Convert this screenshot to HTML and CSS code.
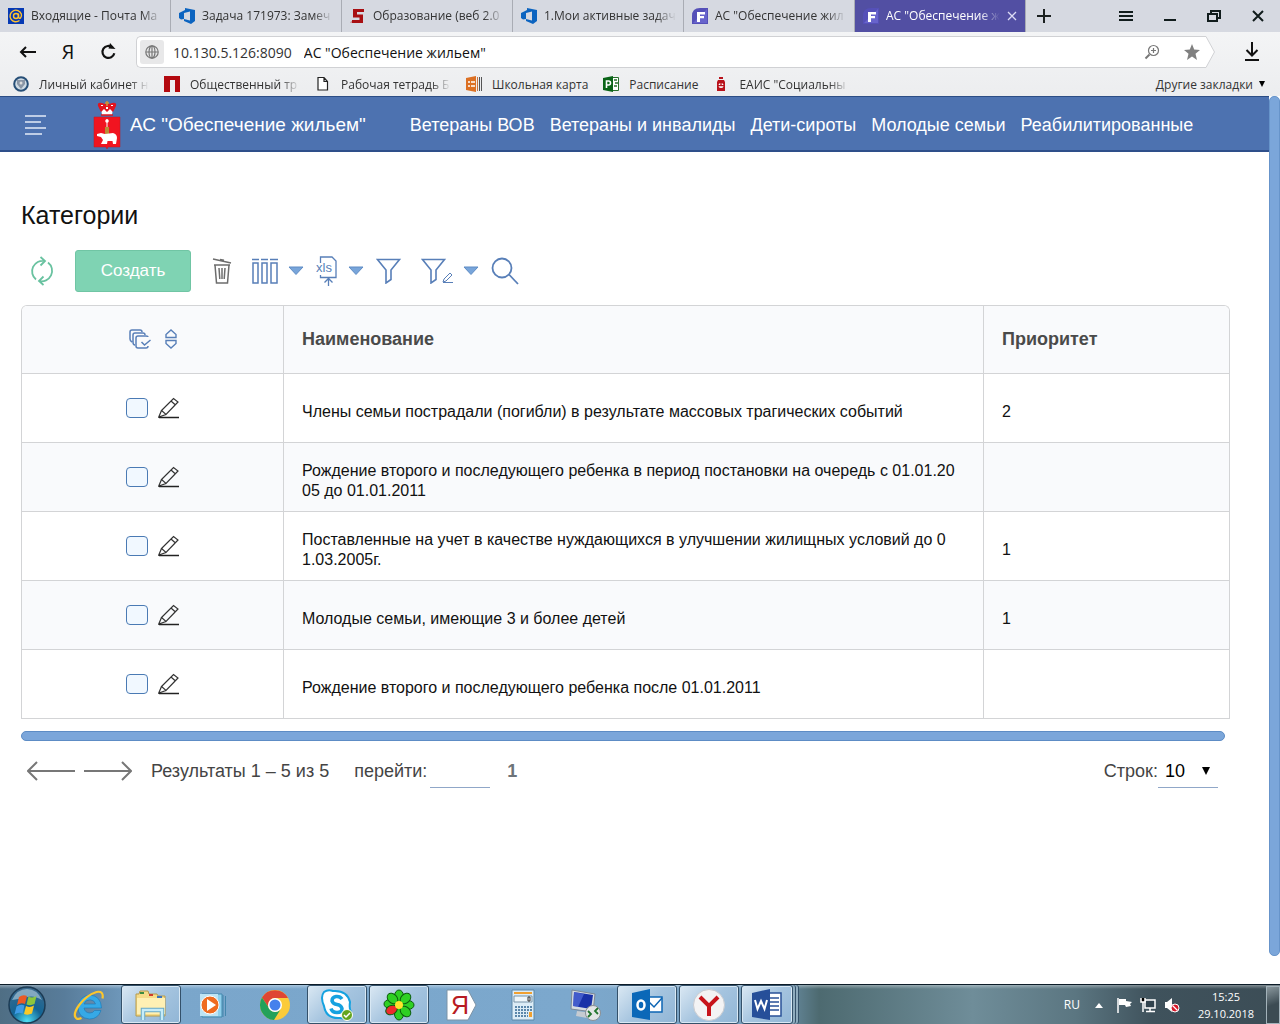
FILE: index.html
```html
<!DOCTYPE html>
<html lang="ru">
<head>
<meta charset="utf-8">
<title>АС "Обеспечение жильем"</title>
<link rel="stylesheet" href="styles.css">
</head>
<body>
<svg class="sprite" aria-hidden="true">
  <symbol id="azure" viewBox="0 0 16 16"><path fill="#0c64c0" fill-rule="evenodd" d="M0 5 6 2V0l10 2v11l-4 3-7-3v-2l-3 .5L0 10zM5 5v6l6 1.500v-9z"/></symbol>
  <symbol id="fapp" viewBox="0 0 16 16"><path fill="#5550b8" d="M0 16V8Q0 0 8 0h8v16z"/><path fill="#8d8af0" d="M1 15 15 1v14z" opacity=".35"/><path fill="#fff" d="M5 4h8v2.500H8V8h4v2.300H8V14H5z"/></symbol>
  <symbol id="pencil" viewBox="0 0 22 22"><path fill="none" stroke="#333" stroke-width="1.200" d="M3.500 13.500 15.500 1.500l4.500 3.500L8 17.500zM13 4l4.500 4M3.500 13.500.8 20l7.200-2.500"/><path stroke="#222" stroke-width="1.500" d="M1 20.500h20"/></symbol>
  <symbol id="caret" viewBox="0 0 16 10"><path fill="#78a5da" stroke="#5e8cc4" d="M1 1h14L8 8.500z"/></symbol>
</svg>

<header class="browser">
  <div class="tabs">
    <button class="tab"><svg class="fav" viewBox="0 0 16 16"><path fill="#0639b4" d="M0 0h16v16H0z"/><g fill="none" stroke="#ffc22e" stroke-width="1.400"><circle cx="8" cy="8" r="2.500"/><path d="M10.500 5.500V9q.5 1.700 2 1 1.500-2 .8-4A5.800 5.800 0 1 0 11.500 12.500"/></g></svg><span class="tab-text">Входящие - Почта Ma</span></button>
    <button class="tab"><svg class="fav"><use href="#azure"/></svg><span class="tab-text">Задача 171973: Замеч</span></button>
    <button class="tab"><svg class="fav" viewBox="0 0 16 16"><path fill="#a80f12" d="M3 1h11v3H7v2.500h6V15H2v-3h7.500V9.500H3z"/><path fill="#c99" d="M1 13h1v2H0z"/></svg><span class="tab-text">Образование (веб 2.0</span></button>
    <button class="tab"><svg class="fav"><use href="#azure"/></svg><span class="tab-text">1.Мои активные задач</span></button>
    <button class="tab"><svg class="fav"><use href="#fapp"/></svg><span class="tab-text">АС "Обеспечение жил</span></button>
    <button class="tab tab-on"><svg class="fav"><use href="#fapp"/></svg><span class="tab-text">АС "Обеспечение ж</span><svg class="close" viewBox="0 0 10 10"><path stroke="#dcdcf5" stroke-width="1.300" d="m1 1 8 8M9 1 1 9"/></svg></button>
    <button class="new-tab" aria-label="Новая вкладка"><svg width="14" height="14" viewBox="0 0 14 14"><path stroke="#1b2020" stroke-width="2" d="M7 0v14M0 7h14"/></svg></button>
    <div class="window-controls">
      <button aria-label="Меню"><svg width="16" height="14" viewBox="0 0 16 14"><path stroke="#111c1c" stroke-width="2" d="M1 3h14M1 7h14M1 11h14"/></svg></button>
      <button aria-label="Свернуть"><svg width="16" height="14" viewBox="0 0 16 14"><path stroke="#111c1c" stroke-width="2" d="M2 11h12"/></svg></button>
      <button aria-label="Окно"><svg width="16" height="14" viewBox="0 0 16 14"><path fill="none" stroke="#111c1c" stroke-width="2" d="M5 5V2h9v7h-3M2 5h9v7H2z"/></svg></button>
      <button aria-label="Закрыть"><svg width="16" height="14" viewBox="0 0 16 14"><path stroke="#111c1c" stroke-width="2" d="m3 2 10 10M13 2 3 12"/></svg></button>
    </div>
  </div>
  <div class="address">
    <button class="nav-btn" aria-label="Назад"><svg width="18" height="16" viewBox="0 0 18 16"><path fill="none" stroke="#111" stroke-width="2" d="M17 8H2M7 3 2 8l5 5"/></svg></button>
    <button class="nav-btn ya">Я</button>
    <button class="nav-btn" aria-label="Обновить"><svg width="18" height="18" viewBox="0 0 18 18"><path fill="none" stroke="#111" stroke-width="2.200" d="M13.500 4.500a6 6 0 1 0 1.800 5.800"/><path fill="#111" d="M9.500 5.500 11 0l5.500 6z"/></svg></button>
    <div class="omnibox">
      <span class="globe"><svg width="14" height="14" viewBox="0 0 14 14"><g fill="none" stroke="#777" stroke-width="1.200"><circle cx="7" cy="7" r="6.200"/><ellipse cx="7" cy="7" rx="3" ry="6.200"/><path d="M1 7h12M7 1v12"/></g></svg></span>
      <label class="host" for="url">10.130.5.126:8090</label>
      <input id="url" class="url" type="text" value='АС "Обеспечение жильем"'>
      <button class="box-btn" aria-label="Масштаб"><svg width="16" height="16" viewBox="0 0 16 16"><g fill="none" stroke="#777" stroke-width="1.200"><circle cx="9.500" cy="6.500" r="5"/><path d="M7 6.500h5M9.500 4v5"/><path stroke-width="2" d="m5.500 10.500-4 4"/></g></svg></button>
      <button class="box-btn" aria-label="В закладки"><svg width="16" height="16" viewBox="0 0 16 16"><path fill="#808080" d="m8 0 2.200 5.600 5.800.3-4.500 3.800L13 16l-5-3.500L3 16l1.500-6.300L0 5.900l5.800-.3z"/></svg></button>
    </div>
    <svg class="tip" viewBox="0 0 10 32"><path fill="#fff" stroke="#d0d1d4" d="M0 .5h1L9.500 16 1 31.500H0"/></svg>
    <button class="download" aria-label="Загрузки"><svg width="16" height="20" viewBox="0 0 16 20"><path fill="none" stroke="#111" stroke-width="2" d="M8 0v13M2.500 8 8 13.500 13.500 8M1 18h14"/></svg></button>
  </div>
  <nav class="bookmarks">
    <a href="#"><svg class="fav" viewBox="0 0 16 16"><circle cx="8" cy="8" r="6.800" fill="#cfdbe4" stroke="#274f77" stroke-width="2"/><path fill="#8996a6" d="M4 4h8v4l-4 5-4-5z"/><circle cx="8" cy="7" r="1.500" fill="#ddd"/></svg><span class="bm-text fade">Личный кабинет н</span></a>
    <a href="#"><svg class="fav" viewBox="0 0 16 16"><path fill="#b3090f" d="M0 0h16v16h-5V4H6v12H0z"/></svg><span class="bm-text fade">Общественный тр</span></a>
    <a href="#"><svg class="fav" viewBox="0 0 16 16"><path fill="#fff" stroke="#222" stroke-width="1.200" d="M3 1.500h6l3.500 4V14H3zM9 1.500v4h3.500"/></svg><span class="bm-text fade">Рабочая тетрадь Б</span></a>
    <a href="#"><svg class="fav" viewBox="0 0 16 16"><path fill="#dc7023" d="M0 2 10 0v16L0 14z"/><path stroke="#fff" stroke-width="1.500" d="M2 6h2M5 6h4M2 10h2M5 10h4"/><path stroke="#c87440" d="M11.500 1v14"/><path stroke="#555" d="M13.500 1v14M15.500 1v14"/></svg><span class="bm-text">Школьная карта</span></a>
    <a href="#"><svg class="fav" viewBox="0 0 16 16"><path fill="#fff" stroke="#28702c" d="M8.500 1.500h7v13h-7z"/><path stroke="#28702c" stroke-width="1.500" d="M11 4h3M12 7h3M11 10h3"/><path fill="#0a6417" d="M0 2 10 0v16L0 14z"/><path fill="none" stroke="#fff" stroke-width="1.600" d="M3.500 12V5h2q2 0 2 2t-2 2h-2"/></svg><span class="bm-text">Расписание</span></a>
    <a href="#"><svg class="fav" viewBox="0 0 16 16"><path fill="#b9121b" d="M6 1h4v2H6zM5 4h6l1 2v9H4V6z"/><circle cx="8" cy="9.500" r="2.500" fill="#fff"/><path fill="#b9121b" d="M7.300 7h1.400v2H11v1.300H5V9h2.300z"/></svg><span class="bm-text fade">ЕАИС "Социальны</span></a>
    <button class="more">Другие закладки <svg width="8" height="7" viewBox="0 0 8 7"><path d="M1 0h6L4 6z"/></svg></button>
  </nav>
</header>

<div class="viewport">
  <div class="page">
    <header class="app-bar">
      <button class="burger" aria-label="Меню"><svg width="22" height="20" viewBox="0 0 22 20"><path stroke="#e4ecf8" stroke-width="1.500" d="M0 1h21M0 7h16M0 13h21M0 19h17"/></svg></button>
      <svg class="emblem" viewBox="0 0 28 48"><path fill="#fff" d="M8 7h12l-1 7H9z"/><path fill="#e1141e" d="M5 5q-1-4 4-3l3 1 2-3 2 3 3-1q5-1 4 3l-3 6-3-3-3 3-3-3-3 3z"/><path fill="none" stroke="#e1141e" stroke-width="1.500" d="M8 14h12"/><path stroke="#c79a3c" stroke-width="1.500" d="M14 0v5M12 2h4"/><path fill="#fff" d="M8 4h2v1H8zM18 4h2v1h-2zM13 6h2v2h-2z"/><path fill="#f11420" stroke="#c01822" stroke-width=".5" d="M1 16h26v30H15l-1 2-1-2H1z"/><circle cx="14" cy="20" r="1.800" fill="#fff"/><path stroke="#bb8b35" stroke-width="4" d="M14 26v7"/><path stroke="#fff" d="M14 18v8"/><path fill="#fff" d="m4 33 4-1 4 1 8-1q4 1 4 5l-1 6h-3l-.5-3h-5L14 43H8l2-4-2-3-4-1z"/></svg>
      <a class="brand" href="#">АС "Обеспечение жильем"</a>
      <nav class="sections">
        <a href="#">Ветераны ВОВ</a><a href="#">Ветераны и инвалиды</a><a href="#">Дети-сироты</a><a href="#">Молодые семьи</a><a href="#">Реабилитированные</a>
      </nav>
    </header>

    <main class="content">
      <h1>Категории</h1>
      <div class="toolbar">
        <button class="tool refresh" aria-label="Обновить"><svg width="24" height="30" viewBox="0 0 24 30"><g fill="none" stroke="#69c2a0" stroke-width="1.800"><path d="M6 23.500A10.500 10.500 0 0 1 14.500 5M10.500 1l4.500 4-4.500 4.500M18 6.500A10.500 10.500 0 0 1 9 25M13.500 20.500 9 25l4.500 4"/></g></svg></button>
        <button class="create">Создать</button>
        <button class="tool trash" aria-label="Удалить"><svg width="20" height="26" viewBox="0 0 20 26"><g fill="none" stroke="#6d6d6d" stroke-width="1.500"><path d="m1 1 18 4M8 1.500l4 .8M2 7h16M3 7l1.500 18h11L17 7M7 10l.8 11M10 10v11M13 10l-.8 11"/></g></svg></button>
        <button class="tool" aria-label="Колонки"><svg width="26" height="26" viewBox="0 0 26 26"><path fill="none" stroke="#587fb8" stroke-width="1.500" d="M0 1.500h7M9 1.500h7M18 1.500h8M1 5h5v20H1zM10 5h5v20h-5zM19 5h6v20h-6z"/></svg></button>
        <button class="tool drop" aria-label="Выбор колонок"><svg width="16" height="10"><use href="#caret"/></svg></button>
        <button class="tool" aria-label="Выгрузить в xls"><svg width="22" height="30" viewBox="0 0 22 30"><path fill="none" stroke="#587fb8" stroke-width="1.300" d="M4.500 7V1H16l4 4v16.500H4.500V19M12.500 30v-7M8.500 26.500l4-4 4 4"/><text x="0" y="16" class="xls">xls</text></svg></button>
        <button class="tool drop" aria-label="Варианты выгрузки"><svg width="16" height="10"><use href="#caret"/></svg></button>
        <button class="tool filter" aria-label="Фильтр"><svg width="26" height="26" viewBox="0 0 26 26"><path fill="none" stroke="#587fb8" stroke-width="1.600" d="M1.500 1.500h22L15 12v9.500L10 25V12z"/></svg></button>
        <button class="tool filter-edit" aria-label="Настроить фильтр"><svg width="34" height="26" viewBox="0 0 34 26"><path fill="none" stroke="#587fb8" stroke-width="1.600" d="M1.500 1.500h22L15 12v9.500L10 25V12z"/><path fill="none" stroke="#587fb8" d="m23 21 6-6 2 2-6 6-3 1zM22 24.500h10"/></svg></button>
        <button class="tool drop" aria-label="Сохранённые фильтры"><svg width="16" height="10"><use href="#caret"/></svg></button>
        <button class="tool search" aria-label="Поиск"><svg width="28" height="28" viewBox="0 0 28 28"><path fill="none" stroke="#587fb8" stroke-width="1.800" d="M18 17.500 27 27"/><circle cx="11" cy="11" r="9.500" fill="none" stroke="#587fb8" stroke-width="1.800"/></svg></button>
      </div>

      <table class="grid">
        <colgroup><col class="c-tools"><col class="c-name"><col class="c-rank"></colgroup>
        <thead>
          <tr>
            <th><div class="row-tools head-tools">
              <button class="tool" aria-label="Выбрать все"><svg width="22" height="20" viewBox="0 0 22 20"><g fill="none" stroke="#587fb8" stroke-width="1.500"><path d="M3 13q-2-1-2-3V3q0-2 2-2h8q2 0 2 2M6 16q-2 0-2-3V6q0-2 2-2h8q2 0 2 2M19 8q0-1-2-1H9Q7 7 7 9v8q0 2 2 2h8q2 0 2-2M12.500 13l3 3 6-5"/></g></svg></button>
              <button class="tool" aria-label="Сортировка"><svg width="12" height="20" viewBox="0 0 12 20"><path fill="none" stroke="#587fb8" stroke-width="1.400" d="M1 8.500V5.500L6 1l5 4.500v3zM1 11.500v3L6 19l5-4.500v-3z"/></svg></button>
            </div></th>
            <th>Наименование</th>
            <th>Приоритет</th>
          </tr>
        </thead>
        <tbody>
          <tr><td><div class="row-tools"><input type="checkbox" aria-label="Выбрать строку 1"><button class="tool" aria-label="Изменить"><svg width="22" height="22"><use href="#pencil"/></svg></button></div></td><td>Члены семьи пострадали (погибли) в результате массовых трагических событий</td><td>2</td></tr>
          <tr><td><div class="row-tools"><input type="checkbox" aria-label="Выбрать строку 2"><button class="tool" aria-label="Изменить"><svg width="22" height="22"><use href="#pencil"/></svg></button></div></td><td>Рождение второго и последующего ребенка в период постановки на очередь с 01.01.2005 до 01.01.2011</td><td></td></tr>
          <tr><td><div class="row-tools"><input type="checkbox" aria-label="Выбрать строку 3"><button class="tool" aria-label="Изменить"><svg width="22" height="22"><use href="#pencil"/></svg></button></div></td><td>Поставленные на учет в качестве нуждающихся в улучшении жилищных условий до 01.03.2005г.</td><td>1</td></tr>
          <tr><td><div class="row-tools"><input type="checkbox" aria-label="Выбрать строку 4"><button class="tool" aria-label="Изменить"><svg width="22" height="22"><use href="#pencil"/></svg></button></div></td><td>Молодые семьи, имеющие 3 и более детей</td><td>1</td></tr>
          <tr><td><div class="row-tools"><input type="checkbox" aria-label="Выбрать строку 5"><button class="tool" aria-label="Изменить"><svg width="22" height="22"><use href="#pencil"/></svg></button></div></td><td>Рождение второго и последующего ребенка после 01.01.2011</td><td></td></tr>
        </tbody>
      </table>
      <div class="h-scroll"></div>

      <div class="pager">
        <button class="tool" aria-label="Предыдущая"><svg width="48" height="20" viewBox="0 0 48 20"><path fill="none" stroke="#777" stroke-width="2" d="M48 10H1M10 1 1 10l9 9"/></svg></button>
        <button class="tool" aria-label="Следующая"><svg width="48" height="20" viewBox="0 0 48 20"><path fill="none" stroke="#777" stroke-width="2" d="M0 10h47M38 1l9 9-9 9"/></svg></button>
        <span class="results">Результаты 1 – 5 из 5</span>
        <label for="goto">перейти:</label>
        <input id="goto" class="line-input" type="text">
        <a class="page-no" href="#">1</a>
        <label class="rows-label" for="rows">Строк:</label>
        <span class="select-wrap"><select id="rows" class="line-input"><option>10</option><option>20</option><option>50</option></select><svg width="8" height="8" viewBox="0 0 8 8"><path d="M0 0h8L4 8z"/></svg></span>
      </div>
    </main>
  </div>
  <div class="v-scroll"></div>
</div>

<footer class="taskbar">
  <button class="start" aria-label="Пуск"><svg width="38" height="38" viewBox="0 0 38 38"><defs><radialGradient id="orb" cx=".5" cy=".95" r=".95"><stop offset="0" stop-color="#4fe0f5"/><stop offset=".45" stop-color="#136595"/><stop offset="1" stop-color="#3e6a8c"/></radialGradient></defs><circle cx="19" cy="19" r="18" fill="url(#orb)" stroke="#1c3b54" stroke-width="1.500"/><path fill="#c6dcea" d="M4 14Q9 3 19 3t15 11q-8-5-15-3T4 14z" opacity=".55"/><path fill="#ea5a26" d="M11 11q4-3 8-1l-2 8q-4-2-8 1z"/><path fill="#8cc63e" d="M20.500 10.500q4 2 8-.5l-2 8q-4 2-8 .5z"/><path fill="#3f9be6" d="M8.500 20.500q4-3 8-1l-2 8q-4-2-8 1z"/><path fill="#fbc926" d="M18 20q4 2 8-.5l-2 8q-4 2-8 .5z"/></svg></button>
  <button class="task" aria-label="Internet Explorer"><svg viewBox="0 0 32 32"><path fill="#36a9e6" stroke="#1678b8" stroke-width=".6" fill-rule="evenodd" d="M28.500 19H11q1 5 6 5 3 0 4.500-2.500H28Q25 30 16.500 30 5 29 5 18 6 7 17 6q11 1 11.500 13zM11 15h11.500q-1-4-5.500-4.200Q12 11 11 15z"/><path fill="none" stroke="#fcc62c" stroke-width="2.200" d="M29.500 9.500q1.500-8-6-6.500Q14 6 6.500 15.500-1 26 3.500 29.500q2 1 5-.5"/></svg></button>
  <button class="task open" aria-label="Проводник"><svg viewBox="0 0 32 32"><path fill="#f6dc88" stroke="#b69a4d" d="M1 5h3l1-3h8l1 3h8l1 2h7v20H1z"/><path fill="#fff0b4" d="M2 9h28v16H2z"/><path stroke="#3a8b42" stroke-width="2" d="M5 4h4"/><path stroke="#cf3b2c" stroke-width="2" d="M14 6h4"/><path stroke="#3b75bd" stroke-width="2" d="M22 8h5"/><path fill="none" stroke="#67a8c6" stroke-width="4.500" d="M8 31V21h19v10"/><path fill="none" stroke="#c6ecf8" stroke-width="2.500" d="M8 31V21h19v10"/></svg></button>
  <button class="task" aria-label="Media Player"><svg viewBox="0 0 32 32"><path fill="#8fd0ec" stroke="#4387ad" d="M5 5h20v23H5z"/><path stroke="#4387ad" d="M26 6v22M28.500 7v20"/><path fill="#bde4f4" d="M3 5h18v22H3z"/><circle cx="13" cy="16" r="9" fill="#ef6b20" stroke="#fff"/><path fill="#fff" d="m10 10 9 6-9 6z"/></svg></button>
  <button class="task" aria-label="Chrome"><svg viewBox="0 0 32 32"><circle cx="16" cy="16" r="15" fill="#fbcb3b"/><path fill="#df4534" d="M3 8.500A15 15 0 0 1 29 9H16a7 7 0 0 0-6 10z"/><path fill="#24a15a" d="M3 8.500A15 15 0 0 0 15 31l6.500-10.500A7 7 0 0 1 10 19z"/><circle cx="16" cy="16" r="7" fill="#fff"/><circle cx="16" cy="16" r="5.500" fill="#4581ec"/></svg></button>
  <button class="task open" aria-label="Skype"><svg viewBox="0 0 32 32"><g fill="#fff" stroke="#15a2e0" stroke-width="2"><path d="M3 3q4-3 9-1 14-1 17 11-1 7 1 10-2 8-11 6Q5 30 3 17-1 8 3 3z"/></g><path fill="none" stroke="#15a2e0" stroke-width="3.500" d="M21 10q-2-3-6-2.500T11 12q1 3 5 3.500t5 4q0 4-5 4t-6-4"/><circle cx="26" cy="26" r="5.500" fill="#63a51f" stroke="#fff"/><path fill="none" stroke="#fff" stroke-width="1.500" d="m23 26 2 2 4-4"/></svg></button>
  <button class="task open" aria-label="ICQ"><svg viewBox="0 0 32 32"><g fill="#2fd023" stroke="#0b5b0c"><ellipse cx="16" cy="7" rx="4.500" ry="6"/><ellipse cx="16" cy="25" rx="4.500" ry="6"/><ellipse cx="25" cy="16" rx="6" ry="4.500"/><ellipse cx="7" cy="15" rx="6" ry="4.500"/><ellipse cx="22.500" cy="9.500" rx="4.500" ry="6" transform="rotate(45 22.500 9.500)"/><ellipse cx="22.500" cy="22.500" rx="4.500" ry="6" transform="rotate(-45 22.500 22.500)"/><ellipse cx="9.500" cy="9.500" rx="4.500" ry="6" transform="rotate(-45 9.500 9.500)"/><ellipse cx="8.500" cy="21" rx="4.500" ry="6" fill="#ee2b2b" transform="rotate(65 8.500 21)"/></g><circle cx="16" cy="16" r="4" fill="#ffe52c"/></svg></button>
  <button class="task" aria-label="Яндекс"><svg viewBox="0 0 32 32"><path fill="#fff" stroke="#7d93a6" d="M2 1h21l8 15-8 15H2z"/><text x="6" y="25" class="ya-red">Я</text></svg></button>
  <button class="task" aria-label="Калькулятор"><svg viewBox="0 0 32 32"><path fill="#dcecf6" stroke="#5d88a8" d="M5 1h22v30H5z"/><path fill="#f0a030" d="M7 3h18v2H7z"/><path fill="#eef6fa" stroke="#7793a8" d="M7 7h18v6H7z"/><path stroke="#5b87aa" stroke-width="2" stroke-dasharray="2 1" d="M8 18h17M8 21h17M8 24h13M8 27h13"/><path fill="#f0a030" d="M22 23h3v5h-3z"/><path fill="none" stroke="#333" d="M21 8h2v4h-2z"/></svg></button>
  <button class="task" aria-label="Удалённый рабочий стол"><svg viewBox="0 0 32 32"><path fill="#d4dbe2" stroke="#7c8896" d="m3 1 23 4-2 18L2 20z"/><path fill="#1931a8" d="m5 3 19 3-2 14L4 17z"/><path fill="#6c86ee" d="m5 3 10 2-6 13-5-1z" opacity=".5"/><path fill="#c6cbd1" d="m8 22 8 1 2 6-11-2z"/><circle cx="24" cy="24" r="7.500" fill="#e3e5e6" stroke="#8a8f94"/><path fill="none" stroke="#22742d" stroke-width="1.800" d="m19 22 3 3-3 3M29 19l-3 3 3 3"/></svg></button>
  <button class="task open" aria-label="Outlook"><svg viewBox="0 0 32 32"><path fill="#fff" stroke="#0d65b4" stroke-width="1.500" d="M17 8h14v15H17z"/><path fill="none" stroke="#0d65b4" stroke-width="1.500" d="m18 13 5 5 8-9"/><path fill="#0b68b8" d="M1 4 19 0v31L1 28z"/><ellipse cx="10" cy="16" rx="3.500" ry="4.500" fill="none" stroke="#fff" stroke-width="2.500"/></svg></button>
  <button class="task open" aria-label="Яндекс.Браузер"><svg viewBox="0 0 32 32"><circle cx="16" cy="16" r="15.500" fill="#f3f3f4" stroke="#c8cbd0"/><path fill="none" stroke="#c7141b" stroke-width="4" d="m7 8 9 9 9-9M16 16v11"/></svg></button>
  <button class="task open word" aria-label="Word"><svg viewBox="0 0 32 32"><path fill="#fff" stroke="#2a5298" stroke-width="1.500" d="M17 4h13v23H17z"/><path stroke="#2a5298" stroke-width="1.500" d="M19 9h9M19 13h9M19 17h9M19 21h9"/><path fill="#264f99" d="M1 4 19 0v31L1 28z"/><path fill="none" stroke="#fff" stroke-width="2" d="m4 11 2.500 9L10 12l3.500 8L16 11"/></svg></button>
  <div class="tray">
    <span class="lang">RU</span>
    <svg width="10" height="6" viewBox="0 0 10 6"><path fill="#fff" d="M1 6h8L5 1z"/></svg>
    <svg class="flag" width="16" height="16" viewBox="0 0 16 16"><path stroke="#fff" stroke-width="1.500" d="M2 1v15"/><path fill="#fff" d="M3 2h7v2l6 1-2 2 1 2-5 1-1-2H3z"/></svg>
    <svg width="16" height="16" viewBox="0 0 16 16"><path fill="#31434e" stroke="#fff" stroke-width="1.500" d="M5 3h10v8H5z"/><path stroke="#fff" stroke-width="1.500" d="M10 11v3M6 14.500h9M1 1v4h4V1M3 5v10"/></svg>
    <svg width="16" height="16" viewBox="0 0 16 16"><path fill="#fff" d="M1 5h2l5-4v14l-5-4H1z"/><circle cx="11" cy="11" r="4" fill="#d6182a" stroke="#fff"/><path stroke="#fff" stroke-width="1.300" d="m8.500 8.500 5 5"/></svg>
    <div class="clock"><time>15:25</time><time>29.10.2018</time></div>
    <button class="show-desktop" aria-label="Показать рабочий стол"></button>
  </div>
</footer>
</body>
</html>
```

FILE: styles.css
```css
*, *::before, *::after { box-sizing: border-box; }

body {
  margin: 0;
  min-height: 100vh;
  display: flex;
  flex-direction: column;
  background: #fff;
  color: #111;
  font-family: "Liberation Sans", Arial, sans-serif;
  font-size: 16px;
}

button {
  padding: 0;
  border: 0;
  background: none;
  color: inherit;
  font: inherit;
}

a { color: inherit; text-decoration: none; }
svg { display: block; flex: none; }
.sprite { position: absolute; width: 0; height: 0; }

/* Browser frame */
.browser {
  background: linear-gradient(#f7f8f9, #ecedef);
  color: #333;
  font-family: "Open Sans", "Noto Sans", sans-serif;
  font-size: 12px;
}

.tabs { display: flex; height: 32px; background: #d6d9e1; }

.tab {
  display: flex;
  align-items: center;
  gap: 7px;
  flex: 0 1 171px;
  min-width: 0;
  padding: 0 8px;
  border-right: 1px solid #a9acb4;
  text-align: left;
}

.tab-on { background: #524fa3; color: #fff; }
.fav { width: 16px; height: 16px; }
.close { width: 10px; height: 10px; }

.tab-text, .fade {
  -webkit-mask-image: linear-gradient(to left, transparent, #000 20px);
  mask-image: linear-gradient(to left, transparent, #000 20px);
}

.tab-text, .bm-text { white-space: nowrap; }
.tab-text { flex: 1; line-height: 20px; }
.fade { min-width: 110px; }
.new-tab { padding: 0 11px; }
.window-controls { display: flex; gap: 28px; margin-left: auto; padding-right: 14px; }

.address { display: flex; align-items: center; height: 40px; padding: 0 20px 0 8px; }
.nav-btn { display: flex; justify-content: center; width: 40px; }
.ya { font-size: 20px; line-height: 24px; color: #111; }

.omnibox {
  display: flex;
  align-items: center;
  flex: 1;
  height: 32px;
  margin-left: 8px;
  padding-left: 3px;
  border: 1px solid #d0d1d4;
  border-right: 0;
  border-radius: 5px 0 0 5px;
  background: #fff;
  font-size: 14px;
}

.globe {
  display: grid;
  place-items: center;
  width: 24px;
  height: 24px;
  border-radius: 3px;
  background: #e8e8e9;
}

.host { margin: 0 12px 0 9px; color: #333; }
.url { flex: 1; min-width: 0; padding: 0; border: 0; color: #111; font: inherit; }
.box-btn { padding: 0 12px; }
.box-btn:last-child { padding-right: 5px; }
.tip { width: 10px; height: 32px; }
.download { margin-left: 29px; }

.bookmarks {
  display: flex;
  align-items: center;
  gap: 15px;
  height: 24px;
  padding: 0 14px 0 13px;
}

.bookmarks a { display: flex; align-items: center; gap: 10px; }
.more { display: flex; align-items: center; gap: 5px; margin-left: auto; }

/* Application */
.viewport { display: flex; flex: 1; }
.page { flex: 1; min-width: 0; }

.v-scroll {
  width: 11px;
  margin-bottom: 28px;
  border: 1px solid #6794ca;
  border-radius: 5px;
  background: #7ba6da;
}

.app-bar {
  display: flex;
  align-items: center;
  height: 56px;
  padding: 3px 0 0 25px;
  border-top: 1px solid #2c4d85;
  border-bottom: 2px solid #2e4f8a;
  background: #4d72b0;
  color: #fff;
  font-size: 18px;
}

.emblem { width: 28px; height: 48px; margin: 0 9px 0 46px; }
.brand { margin-right: 44px; font-size: 19px; }
.sections { display: flex; gap: 15px; }

.content { padding: 48px 39px 0 21px; }
h1 { margin: 0; font-size: 25px; font-weight: 400; line-height: 30px; }

.toolbar { display: flex; align-items: center; height: 42px; margin-top: 20px; padding-left: 9px; }
.create {
  width: 116px;
  height: 42px;
  margin: 0 21px;
  border: 1px solid #70c5a4;
  border-radius: 3px;
  background: #7fd3b3;
  color: #fff;
  font-size: 17px;
}
.trash { margin-right: 20px; }
.drop { margin: 0 12px 0 10px; }
.filter { margin-right: 19px; }
.filter-edit { margin-right: -2px; }
.xls { fill: #587fb8; font-family: "Liberation Sans", Arial, sans-serif; font-size: 13px; }

.grid {
  width: 100%;
  margin-top: 13px;
  border: 1px solid #d3d4d6;
  border-bottom: 0;
  border-radius: 6px 6px 0 0;
  border-spacing: 0;
  table-layout: fixed;
  line-height: 20px;
}

.c-tools { width: 261px; }
.c-name { width: 700px; }

th, td {
  padding: 0 18px;
  border-bottom: 1px solid #d3d4d6;
  text-align: left;
}

th + th, td + td { border-left: 1px solid #d3d4d6; }
th { height: 68px; padding-bottom: 2px; background: #f9fafc; color: #4a4a4a; font-size: 18px; }
th:first-child { border-top-left-radius: 5px; }
th:last-child { border-top-right-radius: 5px; }
td { height: 69px; word-break: break-all; }
td + td { padding: 8px 26px 0 18px; }
tbody tr:nth-child(even) { background: #f9fafc; }

.row-tools { display: flex; align-items: center; justify-content: center; gap: 10px; }
.head-tools { gap: 14px; }

input[type="checkbox"] {
  appearance: none;
  width: 22px;
  height: 20px;
  margin: 0;
  border: 1px solid #4a7ab4;
  border-radius: 4px;
  background: #f1f8ff;
}

.h-scroll {
  height: 10px;
  margin: 12px 5px 0 0;
  border: 1px solid #5d8cc5;
  border-radius: 5px;
  background: #7ba6da;
}

.pager {
  display: flex;
  align-items: center;
  height: 34px;
  margin-top: 13px;
  padding: 0 12px 0 6px;
  color: #444;
  font-size: 18px;
}

.pager .tool + .tool { margin-left: 9px; }
.results { margin: 0 25px 0 19px; }

.line-input {
  width: 60px;
  height: 34px;
  padding: 0 7px;
  border: 0;
  border-bottom: 1px solid #90a7c8;
  background: transparent;
  color: #000;
  font: inherit;
  appearance: none;
}

#goto { margin-left: 3px; }
.page-no { margin-left: 17px; color: #6d7378; font-weight: 700; }
.rows-label { margin-left: auto; }
.select-wrap { display: grid; align-items: center; }
.select-wrap > * { grid-area: 1 / 1; }
.select-wrap svg { justify-self: end; margin-right: 8px; pointer-events: none; }

/* Taskbar */
.taskbar {
  display: flex;
  align-items: center;
  gap: 2px;
  height: 40px;
  padding-left: 8px;
  border-top: 1px solid #0c1c28;
  background:
    linear-gradient(rgba(255, 255, 255, .35), transparent 4px),
    linear-gradient(90deg, #4f6e84 0, #587c9a 5%, #7aa6cb 12%, #7ca8cd 45%, #789fbd 60%, #4d6a70 64%, #6f8d99 76%, #5b7681 84%, #3f525c 90%, #3c4d56 100%);
  color: #fff;
  font-family: "Open Sans", "Noto Sans", sans-serif;
  font-size: 12px;
}

.start { width: 49px; }
.task { display: grid; place-items: center; flex: none; width: 60px; height: 39px; border: 1px solid transparent; border-radius: 3px; }
.task svg { width: 32px; height: 32px; }
.open {
  border-color: #34516a;
  background: linear-gradient(135deg, #dae8f3, #a5c4df 50%, #91b6d6);
  box-shadow: inset 0 0 0 1px #d8e8f4;
}
.word { width: 52px; box-shadow: inset 0 0 0 1px #d8e8f4, 2px 0 #8eabbd, 3px 0 #34516a, 5px 0 #8eabbd, 6px 0 #34516a; }
.ya-red { fill: #b81b22; font-family: "Liberation Sans", Arial, sans-serif; font-size: 25px; }

.tray { display: flex; align-items: center; gap: 8px; margin-left: auto; }
.lang { margin-right: 6px; }
.flag { margin-left: 4px; }
.clock { display: flex; flex-direction: column; align-items: center; margin-left: 10px; font-size: 11px; line-height: 17px; }
.show-desktop {
  width: 14px;
  height: 38px;
  margin-left: 4px;
  border: 1px solid #a3b2ba;
  background: linear-gradient(160deg, #8a979d, #3c4b53 50%);
}
```
